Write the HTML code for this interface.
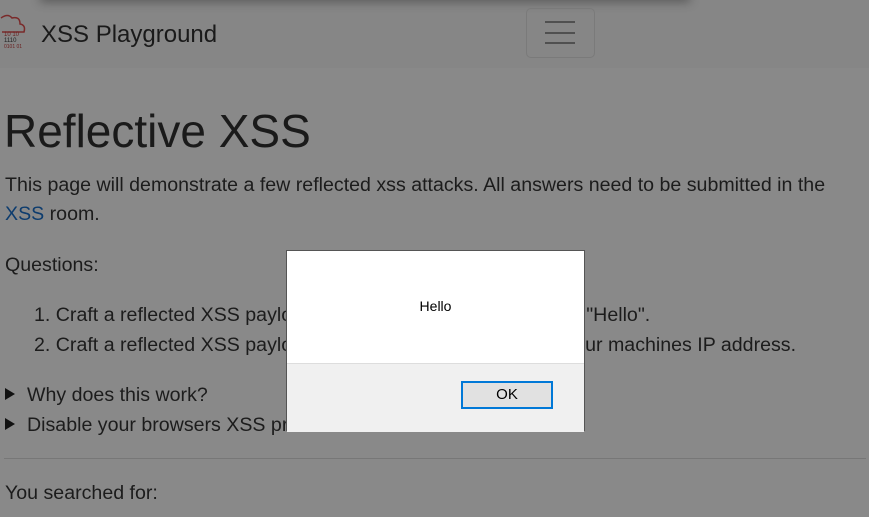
<!DOCTYPE html>
<html><head><meta charset="utf-8"><style>
body{margin:0;width:869px;height:517px;overflow:hidden;background:#898989;font-family:"Liberation Sans",sans-serif;color:#1c1c1c;position:relative}
.a{position:absolute;white-space:nowrap}
.nav{position:absolute;left:0;top:0;width:869px;height:68px;background:#868686}
.shadow{position:absolute;left:40px;top:-10px;width:650px;height:10px;box-shadow:0 2px 10px rgba(0,0,0,.35)}
.t{font-size:19.6px}
.tri{position:absolute;width:0;height:0;border-left:10px solid #111;border-top:6px solid transparent;border-bottom:6px solid transparent}
.dlg{position:absolute;left:286px;top:250px;width:299px;height:181px;background:#fff;border:1px solid #555;box-sizing:border-box}
.foot{position:absolute;left:0;top:112px;width:100%;height:68px;background:#f0f0f0;border-top:1px solid #ddd}
.ok{position:absolute;left:174px;top:17px;width:92px;height:28px;box-sizing:border-box;border:2px solid #0078d7;background:#e1e1e1;font-size:15px;text-align:center;line-height:24px;color:#000}
</style></head><body>
<div class="nav"></div><div class="shadow"></div>
<svg class="a" style="left:0;top:12px" width="28" height="40" viewBox="0 0 28 40">
<path d="M1 6 Q8 1 12 6 Q20 4 20 12 Q26 13 24 20 L2 20" fill="none" stroke="#7a2a2a" stroke-width="1.5"/>
<text x="4" y="24" font-size="6" fill="#6a2020">10 10</text>
<text x="4" y="30" font-size="6" fill="#222">1110</text>
<text x="4" y="36" font-size="5" fill="#6a2020">0101 01</text>
</svg>
<div class="a" style="left:41px;top:21px;font-size:24px;color:#1a1a1a">XSS Playground</div>
<div class="a" style="left:526px;top:8px;width:67px;height:48px;border:1px solid #7a7a7a;border-radius:5px"></div>
<div class="a" style="left:545px;top:21px;width:30px;height:2px;background:#505050"></div>
<div class="a" style="left:545px;top:32px;width:30px;height:2px;background:#505050"></div>
<div class="a" style="left:545px;top:42px;width:30px;height:2px;background:#505050"></div>
<div class="a" style="left:4px;top:104px;font-size:46px;color:#1a1a1a">Reflective XSS</div>
<div class="a t" style="left:5px;top:174px">This page will demonstrate a few reflected xss attacks. All answers need to be submitted in the</div>
<div class="a t" style="left:5px;top:203px"><span style="color:#0d3c6e">XSS</span> room.</div>
<div class="a t" style="left:5px;top:254px">Questions:</div>
<div class="a t" style="left:34px;top:304px">1. Craft a reflected XSS payload that will cause a popup saying "Hello".</div>
<div class="a t" style="left:34px;top:334px">2. Craft a reflected XSS payload that will cause a popup with your machines IP address.</div>
<div class="tri" style="left:5px;top:388px"></div>
<div class="tri" style="left:5px;top:418px"></div>
<div class="a t" style="left:27px;top:384px">Why does this work?</div>
<div class="a t" style="left:27px;top:414px">Disable your browsers XSS protection</div>
<div class="a" style="left:4px;top:458px;width:862px;height:1px;background:#777"></div>
<div class="a t" style="left:5px;top:482px">You searched for:</div>
<div class="dlg">
<div class="a" style="left:0;width:297px;top:47px;text-align:center;font-size:14px;color:#000">Hello</div>
<div class="foot"><div class="ok">OK</div></div>
</div>
</body></html>
